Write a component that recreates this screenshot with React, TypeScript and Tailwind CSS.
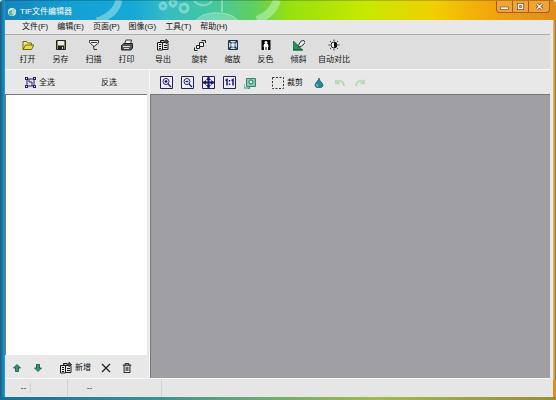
import React from "react";

const P = ({ children, s = 12, v = 12, label }: { children: React.ReactNode; s?: number; v?: number; label?: string }) => (
  <svg width={s} height={s} viewBox={`0 0 ${v} ${v}`} className="shrink-0" role={label ? "img" : undefined} aria-label={label} aria-hidden={label ? undefined : true}>
    {children}
  </svg>
);

const exportArt = (
  <g fill="none" stroke="#1c1c1c">
    <path d="M.5 3.500h5v7.500h-5zM5.500 3.500h5.500v7H5.500z" fill="#e6e6e6" />
    <path d="M2 5.500h2M2 7.500h2M2 9.500h2M7 6.500h3M7 8.500h3" />
    <path d="M3.500 3V1.500h3.500M9 .5l2.500 2L9 4.500 7 2.500z" fill="#555" />
  </g>
);

const OpenIcon = () => (
  <P>
    <path d="M1 10.500V2.500h3.500l1 1.500H9.500V6" fill="#f6ef7a" stroke="#6b6410" />
    <path d="M1 10.500L3.500 6H12L9.500 10.500z" fill="#e9dd4a" stroke="#6b6410" />
  </P>
);
const SaveIcon = () => (
  <P>
    <path d="M1.500 1.500h9v9h-9z" fill="#8d8c3c" stroke="#222" />
    <path d="M3 2h6v4H3z" fill="#e8e8e8" />
    <path d="M3 7h6v4H3z" fill="#222" />
    <path d="M7 8h1v2H7z" fill="#ddd" />
  </P>
);
const ScanIcon = () => (
  <P>
    <path d="M1.500 1.500h9v2.500L6 7.500 1.500 3.500z" fill="#f5f5f5" stroke="#333" />
    <path d="M3 3.500h6M5.500 7l.5 3.500h3" fill="none" stroke="#333" />
  </P>
);
const PrintIcon = () => (
  <P>
    <path d="M3.500 5l1.500-4h5.500L9.500 5" fill="#eee" stroke="#333" />
    <path d="M.5 6.500L3 4.500h8.500V9L10 11H.5z" fill="#555" stroke="#222" />
    <path d="M2 7.500h7M3 9.500h5" stroke="#ddd" />
  </P>
);
const ExportIcon = () => <P>{exportArt}</P>;
const RotateIcon = () => (
  <P>
    <path d="M5.500 3.500h4v4h-4zM2.500 6.500h3v3h-3z" fill="#eee" stroke="#222" />
    <path d="M7.500 1.500h4V4M.5 8.500v3h3" fill="none" stroke="#222" />
  </P>
);
const ScaleIcon = () => (
  <P>
    <path d="M1.500 1.500h9v9h-9z" fill="#c4dbe9" stroke="#1d2f3d" />
    <path d="M2 2l8 8M10 2l-8 8" stroke="#1d3d55" strokeWidth="1.500" />
    <path d="M4 4h4v4H4z" fill="#eef6fa" stroke="#34586e" strokeWidth=".7" />
  </P>
);
const InvertIcon = () => (
  <P>
    <path d="M1.500 1h9v10h-9z" fill="#080808" />
    <circle cx="6" cy="3.500" r="1.500" fill="#fff" />
    <path d="M4 5h4l.5 3H8v3H6.500V8h-1v3H4V8h-.5z" fill="#fff" />
  </P>
);
const SkewIcon = () => (
  <P>
    <path d="M.5 2v9h9z" fill="#169a52" stroke="#0b5a30" strokeWidth=".7" />
    <path d="M5 7l3-5 3-.5 1 2-2 2.500-3 2z" fill="#eee" stroke="#222" strokeWidth=".9" />
    <path d="M0 11h10" stroke="#0b5a30" />
  </P>
);
const ContrastIcon = () => (
  <P>
    <circle cx="6" cy="6" r="3" fill="#f4f4f4" stroke="#222" />
    <path d="M6 3a3 3 0 010 6z" fill="#111" />
    <path d="M6 .5V2M6 10v1.500M.5 6H2M10 6h1.500M2 2l1 1M9 9l1 1M10 2L9 3M3 9l-1 1" stroke="#444" />
  </P>
);
const Frame = ({ children, label }: { children: React.ReactNode; label: string }) => (
  <P s={13} v={13} label={label}>
    <path d="M.5.5h12v12H.5z" fill="#eef0f8" stroke="#20205a" />
    {children}
  </P>
);

const tools = [
  ["打开", OpenIcon, "w-[33px]"],
  ["另存", SaveIcon, "w-[33px]"],
  ["扫描", ScanIcon, "w-[33px]"],
  ["打印", PrintIcon, "w-[33px]"],
  ["导出", ExportIcon, "w-10"],
  ["旋转", RotateIcon, "w-[33px]"],
  ["缩放", ScaleIcon, "w-[33px]"],
  ["反色", InvertIcon, "w-[33px]"],
  ["倾斜", SkewIcon, "w-[33px]"],
  ["自动对比", ContrastIcon, "w-[38px]"],
] as const;

const Arrow = ({ down }: { down?: boolean }) => (
  <P s={8} v={8} label={down ? "下移" : "上移"}>
    <path
      d={down ? "M4 7.500L.5 4h2V.5h3V4h2z" : "M4 .5L.5 4h2v3.500h3V4h2z"}
      fill="#2f9a68"
      stroke="#174c38"
      strokeWidth=".8"
    />
  </P>
);

export default function App() {
  return (
    <div className="relative flex h-screen flex-col overflow-hidden rounded-t bg-[linear-gradient(90deg,#1682b8_0%,#149fd2_12%,#16a9d8_24%,#36bcc2_30%,#44c6a0_38%,#62d05c_46%,#98e010_52%,#c8e800_66%,#f0cf00_78%,#f3a60c_88%,#e08c1c_100%)] pr-[3px] pb-[3px] pl-[5px] font-['Liberation_Sans','Noto_Sans_CJK_SC',sans-serif] text-[8px] leading-[10px] text-[#111]">
      <svg className="absolute top-0 left-0" width="300" height="20" aria-hidden="true">
        <g fill="none" stroke="#d8fff0" strokeOpacity=".4">
          <path d="M119 0c-2 10-10 17-22 21" strokeWidth="7" />
          <circle cx="163" cy="6" r="3" strokeWidth="3" />
          <circle cx="173" cy="3" r="3" strokeWidth="3" />
          <circle cx="184" cy="8" r="4" strokeWidth="3" />
          <path d="M194 1c6 6 14 5 18 0" strokeWidth="2" />
          <path d="M196 21c5-11 36-11 42 0" strokeWidth="1" fill="#d8fff0" fillOpacity=".3" />
          <path d="M222 12V0" strokeWidth="2" />
          <path d="M277 0c-3 10-9 16-20 20" strokeWidth="8" />
        </g>
      </svg>
      <header className="relative flex h-5 shrink-0 items-center border-t border-black/20 pt-[2px] pl-[2px]">
        <P s={10} v={10}>
          <circle cx="5" cy="5" r="4" fill="#dff3e8" />
          <path d="M2 4l5-2 2 3-4 4-3-1z" fill="#5fb7a8" />
          <path d="M5 4h4M5 6h3" stroke="#fff" />
        </P>
        <h1 className="ml-[3px] text-white">TIF文件编辑器</h1>
        <div className="-mt-[2px] mr-[3px] ml-auto flex h-3 self-start rounded-b border border-t-0 border-[#a85c10] bg-[#f0a437]">
          <button aria-label="最小化" className="flex w-4 items-center justify-center border-r border-[#a85c10]">
            <P s={9} v={9}><path d="M.5 5h8v2.500h-8z" fill="#fff" stroke="#80501c" strokeWidth=".7" /></P>
          </button>
          <button aria-label="最大化" className="flex w-4 items-center justify-center border-r border-[#a85c10]">
            <P s={9} v={9}><path d="M2.500 2.500h4v4h-4z" fill="none" stroke="#70451d" strokeWidth="3" /><path d="M2.500 2.500h4v4h-4z" fill="none" stroke="#fff" strokeWidth="1.500" /></P>
          </button>
          <button aria-label="关闭" className="flex w-5 items-center justify-center">
            <P s={9} v={9}><path d="M2 2l5 5M7 2L2 7" stroke="#70451d" strokeWidth="3" /><path d="M2 2l5 5M7 2L2 7" stroke="#fff" strokeWidth="1.500" /></P>
          </button>
        </div>
      </header>

      <div className="relative flex min-h-0 flex-1 flex-col bg-[#e8e8e8] pr-[3px]">
        <nav className="flex h-[14px] shrink-0 items-center gap-[9px] pl-[17px]">
          {["文件(F)", "编辑(E)", "页面(P)", "图像(G)", "工具(T)", "帮助(H)"].map((m) => (
            <button key={m} className="whitespace-nowrap">{m}</button>
          ))}
        </nav>
        <div className="flex h-9 shrink-0 items-start border-t border-b border-t-[#adadad] border-b-[#f8f8f8] bg-[#dedede] pt-1 pl-[6px]">
          {tools.map(([name, Icon, width]) => (
            <button key={name} className={`flex shrink-0 flex-col items-center gap-1 whitespace-nowrap ${width}`}>
              <Icon />
              {name}
            </button>
          ))}
        </div>

        <div className="flex min-h-0 flex-1">
          <aside className="flex w-[142px] shrink-0 flex-col">
            <div className="flex h-6 shrink-0 items-center pt-px pl-5">
              <button className="flex items-center gap-[3px]">
                <P s={11} v={11}>
                  <path d="M2 2h7v7H2zM4 5h3v4M4 5V2" fill="none" stroke="#22226a" />
                  <path d="M0 0h3v3H0zM8 0h3v3H8zM0 8h3v3H0zM8 8h3v3H8z" fill="#22226a" />
                  <path d="M1 1h1v1H1zM9 1h1v1H9zM1 9h1v1H1zM9 9h1v1H9z" fill="#fff" />
                </P>
                全选
              </button>
              <button className="ml-[46px]">反选</button>
            </div>
            <div className="min-h-0 flex-1 border-t border-l border-[#777] bg-white" />
            <div className="flex h-[23px] shrink-0 items-center pt-[2px] pl-2">
              <button><Arrow /></button>
              <button className="ml-[13px]"><Arrow down /></button>
              <button className="ml-[18px] flex items-center gap-[3px]">
                <ExportIcon />
                新增
              </button>
              <button className="ml-[10px]">
                <P s={10} v={10} label="移除"><path d="M1 1l8 8M9 1L1 9" stroke="#222" strokeWidth="1.300" /></P>
              </button>
              <button className="ml-[11px]">
                <P s={10} v={12} label="删除">
                  <path d="M1 2.500h10M4 2V.5h4V2M2.500 3v8.500h7V3M5 4.500v5M7 4.500v5" fill="none" stroke="#333" strokeWidth="1.300" />
                </P>
              </button>
            </div>
          </aside>
          <main className="ml-[2px] flex min-w-0 flex-1 flex-col border-l border-[#f8f8f8]">
            <div className="flex h-6 shrink-0 items-center gap-2 pt-px pl-[10px]">
              <button><Frame label="放大"><circle cx="6" cy="5.500" r="3" fill="#fff" stroke="#20206a" /><path d="M8 8l3 3M4.500 5.500h3M6 4v3" stroke="#20206a" strokeWidth="1.300" /></Frame></button>
              <button><Frame label="缩小"><circle cx="6" cy="5.500" r="3" fill="#fff" stroke="#20206a" /><path d="M8 8l3 3M4.500 5.500h3" stroke="#20206a" strokeWidth="1.300" /></Frame></button>
              <button><Frame label="适合窗口"><path d="M6.500 1v11M1 6.500h11" stroke="#161680" strokeWidth="2" /><path d="M4 4l2.500-3L9 4zM4 9l2.500 3L9 9zM4 4L1 6.500 4 9zM9 4l3 2.500L9 9z" fill="#161680" /></Frame></button>
              <button><Frame label="实际大小"><path d="M2.500 4.500L4 3.500v6M8.500 4.500L10 3.500v6M6.500 4v1.500M6.500 7.500V9" fill="none" stroke="#161680" strokeWidth="1.500" /></Frame></button>
              <button>
                <P label="旋转视图"><path d="M2.500 1.500h9v8h-9z" fill="#8ac8b3" stroke="#35846e" /><circle cx="7" cy="5" r="2" fill="#e2f3eb" stroke="#267760" /><path d="M0 7v4h6M4 9l2 2-2 1" fill="none" stroke="#349079" /></P>
              </button>
              <button className="ml-2 flex items-center gap-[3px]">
                <P><path d="M.5.5h11v11H.5z" fill="none" stroke="#333" strokeDasharray="2 1.500" /></P>
                裁剪
              </button>
              <button className="ml-[3px]">
                <P s={10} v={10} label="填充"><path d="M5 0C5 2 1 5 1 7c0 4 8 4 8 0C9 5 5 3 5 0z" fill="#218b98" stroke="#164b5c" strokeWidth=".7" /><path d="M3 6c-1 1 0 2 1 2" fill="none" stroke="#a6f3f3" /></P>
              </button>
              <button disabled className="ml-[3px]">
                <P s={11} label="撤销"><path d="M1 3v4h4M1 7c3-5 8-3 9 3" fill="none" stroke="#b9d6b5" strokeWidth="2" /></P>
              </button>
              <button disabled>
                <P s={11} label="重做"><path d="M11 3v4H7M11 7C8 2 3 4 2 10" fill="none" stroke="#bcd8bb" strokeWidth="2" /></P>
              </button>
            </div>
            <div className="min-h-0 flex-1 border-t border-l border-[#77777a] bg-[#a09fa4]" />
          </main>
        </div>
        <footer className="flex h-[19px] shrink-0 items-center border-t border-[#f8f8f8] bg-[#e6e6e6] text-center">
          <span className="w-[26px] border-r border-[#d2d2d2] pl-3">--</span>
          <span className="h-full w-[37px] border-r border-[#d2d2d2]" />
          <span className="h-full w-[94px] border-r border-[#d2d2d2] pt-1 pr-[50px]">--</span>
        </footer>
      </div>
      <div className="absolute inset-y-0 left-0 w-[5px] bg-linear-to-r from-[#175c87] to-[#1d9fcb]" aria-hidden="true" />
      <div className="absolute inset-y-5 right-0 w-[3px] bg-linear-to-r from-[#f0c176] to-[#9a7222]" aria-hidden="true" />
      <div className="absolute inset-x-0 bottom-0 h-[3px] bg-[linear-gradient(90deg,#176f96,#348e98_25%,#69a878_45%,#9fba50_68%,#9a8d36_100%)]" aria-hidden="true" />
    </div>
  );
}
